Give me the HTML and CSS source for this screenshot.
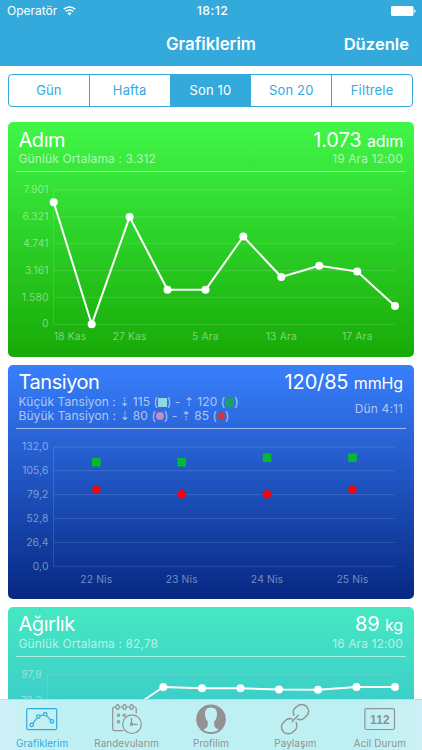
FILE: index.html
```html
<!DOCTYPE html>
<html lang="tr">
<head>
<meta charset="utf-8">
<meta name="viewport" content="width=device-width, initial-scale=1">
<title>Grafiklerim</title>
<link rel="stylesheet" href="styles.css">
</head>
<body>
<header class="top">
  <div class="status">
    <span class="carrier">Operatör
      <svg class="wifi" width="13" height="10" viewBox="0 0 13 10" fill="none" stroke="#fff" stroke-width="1.6"><path d="M.7 3.3a8.3 8.3 0 0 1 11.6 0M2.8 5.5a5.3 5.3 0 0 1 7.4 0"/><path d="M4.5 7.3a2.9 2.9 0 0 1 4 0L6.5 9.4z" fill="#fff" stroke="none"/></svg>
    </span>
    <span class="clock">18:12</span>
    <svg class="battery" width="25" height="10" viewBox="0 0 25 10" fill="#fff"><rect width="22.5" height="10" rx="1.5"/><path d="M23.2 3.2q1.4.4 1.4 1.8t-1.4 1.8z"/></svg>
  </div>
  <nav class="nav"><h1>Grafiklerim</h1><span class="edit">Düzenle</span></nav>
</header>

<div class="segments">
  <span class="segment">Gün</span><span class="segment">Hafta</span><span class="segment active">Son 10</span><span class="segment">Son 20</span><span class="segment">Filtrele</span>
</div>

<main class="cards">
  <section class="card steps">
    <div class="head">
      <div class="row"><h2>Adım</h2><p class="value">1.073 <small>adım</small></p></div>
      <div class="row sub"><span>Günlük Ortalama : 3.312</span><span class="date">19 Ara 12:00</span></div>
    </div>
    <svg class="chart" width="405" height="185" viewBox="8 172 405 185">
      <path class="grid" d="M53.5 190V324.3M53.5 190.2H395M53.5 217H395M53.5 243.7H395M53.5 270.5H395M53.5 297.3H395M53.5 324.3H395"/>
      <g class="axis y"><text x="48.5" y="193">7.901</text><text x="48.5" y="220">6.321</text><text x="48.5" y="247">4.741</text><text x="48.5" y="273.7">3.161</text><text x="48.5" y="300.5">1.580</text><text x="48.5" y="327.3">0</text></g>
      <g class="axis x"><text x="70" y="340">18 Kas</text><text x="129.6" y="340">27 Kas</text><text x="205.3" y="340">5 Ara</text><text x="281.3" y="340">13 Ara</text><text x="357.3" y="340">17 Ara</text></g>
      <path class="line" d="M53.7 202.3L91.7 324.3L129.6 217L167.5 289.8H205.5L243.3 236.5L281.3 277L319.2 265.7L357.2 271.4L395 306"/>
      <g fill="#fff"><circle cx="53.7" cy="202.3" r="4"/><circle cx="91.7" cy="324.3" r="4"/><circle cx="129.6" cy="217" r="4"/><circle cx="167.5" cy="289.8" r="4"/><circle cx="205.5" cy="289.8" r="4"/><circle cx="243.3" cy="236.5" r="4"/><circle cx="281.3" cy="277" r="4"/><circle cx="319.2" cy="265.7" r="4"/><circle cx="357.2" cy="271.4" r="4"/><circle cx="395" cy="306" r="4"/></g>
    </svg>
  </section>

  <section class="card pressure">
    <div class="head">
      <div class="row"><h2>Tansiyon</h2><p class="value">120/85 <small>mmHg</small></p></div>
      <div class="row sub">
        <div class="ranges">
          <p>Küçük Tansiyon : <i class="arrow">⇣</i> 115 (<b class="mark low-square"></b>) - <i class="arrow">⇡</i> 120 (<b class="mark high-square"></b>)</p>
          <p>Büyük Tansiyon : <i class="arrow">⇣</i> 80 (<b class="mark round low-dot"></b>) - <i class="arrow">⇡</i> 85 (<b class="mark round high-dot"></b>)</p>
        </div>
        <span class="date">Dün 4:11</span>
      </div>
    </div>
    <svg class="chart" width="405" height="170" viewBox="8 429 405 170">
      <path class="grid" d="M53.5 447V566.3M53.5 447H395M53.5 470.7H395M53.5 494.6H395M53.5 518.5H395M53.5 542.4H395M53.5 566.3H395"/>
      <g class="axis y"><text x="48.5" y="450.2">132,0</text><text x="48.5" y="474">105,6</text><text x="48.5" y="498">79,2</text><text x="48.5" y="521.7">52,8</text><text x="48.5" y="545.6">26,4</text><text x="48.5" y="569.5">0,0</text></g>
      <g class="axis x"><text x="96.3" y="582.7">22 Nis</text><text x="181.7" y="582.7">23 Nis</text><text x="267" y="582.7">24 Nis</text><text x="352.4" y="582.7">25 Nis</text></g>
      <path fill="#07b830" d="M92 458h8.6v8.6H92zM177.4 458h8.6v8.6h-8.6zM262.8 453.5h8.6v8.6h-8.6zM348.2 453.5h8.6v8.6h-8.6z"/>
      <g fill="#fb0007"><circle cx="96.3" cy="489.6" r="4.2"/><circle cx="181.7" cy="494.2" r="4.2"/><circle cx="267" cy="494.2" r="4.2"/><circle cx="352.4" cy="489.6" r="4.2"/></g>
    </svg>
  </section>

  <section class="card weight">
    <div class="head">
      <div class="row"><h2>Ağırlık</h2><p class="value">89 <small>kg</small></p></div>
      <div class="row sub"><span>Günlük Ortalama : 82,78</span><span class="date">16 Ara 12:00</span></div>
    </div>
    <svg class="chart" width="405" height="184" viewBox="8 657 405 184">
      <path class="grid" d="M47.3 674.7V809M47.3 674.7H395M47.3 701.4H395"/>
      <g class="axis y"><text x="41.7" y="678">97,9</text><text x="41.7" y="704">78,3</text></g>
      <path class="line" d="M124.6 713L163.3 687L202 688.3H240.5L279 689.5L318 689.8L356.5 687H395"/>
      <g fill="#fff"><circle cx="163.3" cy="687" r="4"/><circle cx="202" cy="688.3" r="4"/><circle cx="240.5" cy="688.3" r="4"/><circle cx="279" cy="689.5" r="4"/><circle cx="318" cy="689.8" r="4"/><circle cx="356.5" cy="687" r="4"/><circle cx="395" cy="687" r="4"/></g>
    </svg>
  </section>
</main>

<nav class="tabs">
  <a class="tab current"><svg width="32" height="32" viewBox="0 0 32 32"><rect x=".7" y="5.7" width="30" height="21" rx="1.8"/><path d="M6.9 20.3L10.9 15.2M14.2 12.9L17.4 11.8M20.6 12.7L24.6 17.1"/><circle cx="5.7" cy="21.9" r="1.7"/><circle cx="12.3" cy="13.6" r="1.7"/><circle cx="19.2" cy="11.3" r="1.7"/><circle cx="25.8" cy="18.4" r="1.7"/></svg><span>Grafiklerim</span></a>
  <a class="tab"><svg width="32" height="32" viewBox="0 0 32 32"><path d="M12.4 27.6H3.6Q1.7 27.6 1.7 25.7V5.6Q1.7 4 3.3 4H4.8M8.2 4H11.8M15.2 4H18.8M22.2 4H23.6Q25.2 4 25.2 5.6V10.6"/><ellipse cx="6.5" cy="4" rx="1.6" ry="2.3"/><ellipse cx="13.5" cy="4" rx="1.6" ry="2.3"/><ellipse cx="20.5" cy="4" rx="1.6" ry="2.3"/><circle cx="7.5" cy="12.2" r="1.2"/><circle cx="13.2" cy="12.2" r="1.2"/><circle cx="7.5" cy="18.8" r="1.2"/><circle cx="21" cy="21.2" r="9.3"/><path d="M20.5 15V20.2M21.6 21.3H26.5"/><circle cx="20.5" cy="21.3" r="1.1"/></svg><span>Randevularım</span></a>
  <a class="tab"><svg width="32" height="32" viewBox="0 0 32 32"><circle cx="16" cy="16.2" r="14.8" fill="#929292" stroke="none"/><path fill="#c0f0f2" stroke="none" d="M16 4.5c-4.200 0-6.300 2.800-6 7.200.2 3.100 1.200 5.300 2.700 6.900.4 2.500.2 4.700-1.200 6.200-.9.900-2.200 1.400-3.200 2 2.200 1.500 4.900 2.300 7.700 2.300s5.500-.8 7.700-2.300c-1-.6-2.300-1.100-3.200-2-1.400-1.500-1.600-3.700-1.200-6.200 1.500-1.600 2.500-3.800 2.700-6.900.3-4.400-1.800-7.200-6-7.200z"/></svg><span>Profilim</span></a>
  <a class="tab"><svg width="32" height="32" viewBox="0 0 32 32"><g stroke-width="1.4"><path d="M12.7 18.900L19.700 11.900"/><path d="M15.200 12.600C13.600 9.600 14.100 7.100 16.100 5.100L18.200 3.200C20.600 1 24.800.8 27.500 3.400 30.300 6.100 30.300 10.100 27.800 12.600L25.700 14.700C23.500 16.800 20.500 17.100 18 15.900"/><path d="M16.900 18.900C18.500 22.200 18 25.200 16 27.200L13.900 29.100C11.500 31.300 7.300 31.500 4.600 28.900 1.800 26.200 1.800 22.200 4.300 19.700L6.400 17.600C8.600 15.500 11.600 15.200 13.600 16.100"/></g></svg><span>Paylaşım</span></a>
  <a class="tab"><svg width="32" height="32" viewBox="0 0 32 32"><rect x=".9" y="5.700" width="29.600" height="20.800" rx="1.800"/><text class="emergency" x="15.900" y="20.600">112</text></svg><span>Acil Durum</span></a>
</nav>
</body>
</html>
```
FILE: styles.css
```css
* { box-sizing: border-box; margin: 0; padding: 0; }
html, body { height: 100%; overflow: hidden; }
body { display: flex; flex-direction: column; background: #fff; color: #fff; font-family: Inter, "Liberation Sans", sans-serif; font-weight: 400; }

.top { flex: none; height: 65.5px; background: #34aadc; }
.status { height: 22px; padding: 0 6px 0 7px; display: grid; grid-template-columns: 1fr auto 1fr; align-items: center; font-size: 12px; line-height: 22px; letter-spacing: 0; }
.carrier { display: flex; align-items: center; gap: 6px; }
.clock { font-weight: 500; font-size: 12.3px; letter-spacing: .4px; padding-left: 2px; }
.battery { justify-self: end; }
.nav { height: 43px; display: grid; grid-template-columns: 1fr auto 1fr; align-items: center; padding: 0 13px; }
.nav h1 { grid-column: 2; font-size: 16.8px; font-weight: 600; }
.edit { justify-self: end; font-size: 16.6px; font-weight: 600; }

.segments { flex: none; display: flex; height: 33.5px; margin: 8px 8px 0; width: 405px; border: 1px solid #34aadc; border-radius: 4px; overflow: hidden; color: #34aadc; font-size: 13px; letter-spacing: .15px; }
.segment { flex: 1; display: flex; align-items: center; justify-content: center; }
.segment + .segment { border-left: 1px solid #34aadc; }
.segment.active { background: #34aadc; color: #fff; }

.cards { flex: 1; min-height: 0; overflow: hidden; display: flex; flex-direction: column; gap: 8px; margin: 15px 8px 0; width: 405.5px; }
.card { height: 234px; flex: none; border-radius: 5px; overflow: hidden; }
.steps { height: 235px; background: linear-gradient(#40f748, #18aa07); }
.pressure { background: linear-gradient(#387ffd, #062882); }
.weight { background: linear-gradient(#45e8c2, #30a9d3); }
.head { height: 50px; margin: 0 8px; padding: 6px 2.5px 0; border-bottom: 1.3px solid rgba(255,255,255,.55); }
.pressure .head { height: 64px; }
.row { display: flex; justify-content: space-between; }
.row h2, .value { font-size: 20px; line-height: 22px; font-weight: 400; white-space: nowrap; letter-spacing: -.45px; }
.value { letter-spacing: -.15px; }
.value small { font-size: 16px; }
.steps .row:first-child { padding-top: 1px; margin-bottom: -1px; }
.sub { padding-top: 1px; font-size: 12px; line-height: 14px; color: rgba(255,255,255,.62); white-space: nowrap; letter-spacing: .12px; }
.pressure .sub { align-items: center; }
.ranges p { height: 14px; line-height: 14px; display: flex; white-space: pre; letter-spacing: .07px; }
.arrow { font: 12px/14px "DejaVu Sans", sans-serif; width: 10px; }
.mark { width: 9px; height: 9px; align-self: center; }
.low-square { background: #91d6e3; }
.high-square { background: #1d9d68; }
.round { width: 8px; height: 8px; border-radius: 50%; }
.low-dot { background: #c48cc0; }
.high-dot { background: #c43b50; }
.chart { display: block; }
.grid { fill: none; stroke: #fff; stroke-opacity: .13; }
.axis { fill: #fff; fill-opacity: .45; font-size: 10.3px; letter-spacing: .1px; }
.axis.y { text-anchor: end; }
.axis.x { text-anchor: middle; letter-spacing: .15px; }
.line { fill: none; stroke: #fff; stroke-width: 2; stroke-linejoin: round; }

.tabs { position: fixed; left: 0; right: 0; bottom: 0; height: 51px; display: flex; padding-top: 3.5px; background: linear-gradient(90deg, #d0f2f8, #bff0f3 12%, #bdf0f2 88%, #cdf1f6); color: #929292; box-shadow: inset 0 .5px rgba(120,150,150,.4); }
.tab { flex: 1; display: flex; flex-direction: column; align-items: center; font-size: 9.9px; line-height: 13px; letter-spacing: .1px; }
.tab span { margin-top: 2px; white-space: nowrap; }
.tab svg { fill: none; stroke: currentColor; stroke-width: 1.2; }
.current { color: #34aadc; }
.tab .emergency { fill: currentColor; stroke: none; font: 700 12px "Liberation Sans", sans-serif; text-anchor: middle; }
```
